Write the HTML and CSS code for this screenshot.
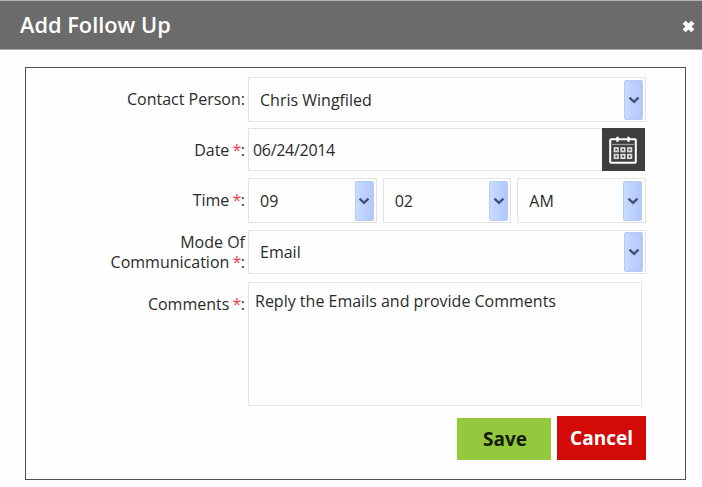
FILE: index.html
```html
<!DOCTYPE html>
<html lang="en">
<head>
<meta charset="utf-8">
<title>Add Follow Up</title>
<link rel="stylesheet" href="styles.css">
</head>
<body>
<svg width="0" height="0" class="defs">
  <symbol id="chevron" viewBox="0 0 12 8"><path d="M1.5 1.7 6 5.8 10.5 1.7" fill="none" stroke="#3f5478" stroke-width="2.5"/></symbol>
</svg>
<header class="titlebar">
  <h1><span>Add Follow Up</span></h1>
  <svg class="close" viewBox="0 0 12 12"><path d="M2 2 10 10M10 2 2 10" stroke="#fff" stroke-width="4"/></svg>
</header>
<main class="panel">
  <div class="row contact">
    <div class="label"><span>Contact Person:</span></div>
    <div class="select"><span>Chris Wingfiled</span><i class="arrow"><svg><use href="#chevron"/></svg></i></div>
  </div>
  <div class="row date">
    <div class="label"><span>Date <b>*</b>:</span></div>
    <div class="datebox"><span>06/24/2014</span>
      <i class="calendar"><svg width="28" height="28" viewBox="0 0 28 28" fill="none" stroke="#fff">
        <rect x="1.2" y="3.2" width="25.6" height="23.6" rx="1" stroke-width="2"/>
        <path d="M3 8.5h22" stroke="#999" stroke-width="1.3"/>
        <path d="M8.5 .7v5M19.5 .7v5" stroke-width="2.4"/>
        <g stroke="#ddd" stroke-width="1.7"><rect x="5.5" y="12" width="3.5" height="3.5"/><rect x="12.2" y="12" width="3.5" height="3.5"/><rect x="18.9" y="12" width="3.5" height="3.5"/><rect x="5.5" y="18.7" width="3.5" height="3.5"/><rect x="12.2" y="18.7" width="3.5" height="3.5"/><rect x="18.9" y="18.7" width="3.5" height="3.5"/></g>
      </svg></i>
    </div>
  </div>
  <div class="row time">
    <div class="label"><span>Time <b>*</b>:</span></div>
    <div class="times">
      <div class="select"><span>09</span><i class="arrow"><svg><use href="#chevron"/></svg></i></div>
      <div class="select"><span>02</span><i class="arrow"><svg><use href="#chevron"/></svg></i></div>
      <div class="select"><span>AM</span><i class="arrow"><svg><use href="#chevron"/></svg></i></div>
    </div>
  </div>
  <div class="row mode">
    <div class="label"><span>Mode Of<br>Communication <b>*</b>:</span></div>
    <div class="select"><span>Email</span><i class="arrow"><svg><use href="#chevron"/></svg></i></div>
  </div>
  <div class="row comments">
    <div class="label"><span>Comments <b>*</b>:</span></div>
    <div class="textarea"><span>Reply the Emails and provide Comments</span></div>
  </div>
  <div class="actions">
    <div class="button save"><span>Save</span></div>
    <div class="button cancel"><span>Cancel</span></div>
  </div>
</main>
</body>
</html>
```
FILE: styles.css
```css
* { box-sizing: border-box; }
body {
  margin: 0;
  height: 487px;
  overflow: hidden;
  background: #fefefe;
  color: #2b2b2b;
  font: 16px/20px "Open Sans", sans-serif;
}
.defs { position: absolute; }
.titlebar {
  height: 50px;
  padding: 0 7px 0 20px;
  display: flex;
  align-items: center;
  justify-content: space-between;
  background: #6b6b6b;
  border-top: 1px solid #b5b5b5;
  border-bottom: 1px solid #a5a5a5;
  color: #fff;
}
h1 { margin: 0; font-size: 21.8px; line-height: 30px; font-weight: 600; }
.close { width: 13px; height: 13px; margin-top: 2px; }
.panel {
  width: 661px;
  height: 413px;
  margin: 17px 0 0 25px;
  padding-top: 9px;
  border: 1px solid #505050;
}
.row {
  display: grid;
  grid-template-columns: 219px 398px;
  column-gap: 3px;
}
.label { text-align: right; white-space: nowrap; }
.label b { margin: 0 -.5px 0 -1px; color: #f23a50; font-weight: 400; }
.select, .datebox, .textarea { border: 1px solid #e3e3e3; background: #fefefe; }
.select {
  height: 45px;
  padding: 2px 2px 2px 11px;
  display: flex;
  align-items: center;
  justify-content: space-between;
}
.arrow {
  width: 19px;
  height: 40px;
  border-radius: 2px;
  border: 1px solid #b3cbf8;
  background: linear-gradient(90deg, #c9dbff, #b0c8fb);
  display: grid;
  place-items: center;
}
.arrow svg { width: 12px; height: 8px; }
.contact { height: 51px; }
.contact .label { padding-top: 12px; }
.date { height: 50px; }
.date .label { padding-top: 12px; }
.datebox {
  width: 397px;
  height: 43px;
  padding-left: 4px;
  display: flex;
  align-items: center;
  justify-content: space-between;
}
.datebox span { letter-spacing: -.3px; }
.calendar {
  width: 43px;
  height: 43px;
  margin-right: -1px;
  background: #3e3e3e;
  display: grid;
  place-items: center;
}
.calendar svg { margin-right: 1px; }
.time { height: 52px; }
.time .label { padding-top: 12px; }
.times { width: 398px; display: flex; gap: 6px; }
.times .select { width: 129px; }
.times .select:last-child { padding-right: 3px; }
.mode { height: 52px; }
.mode .label { padding-top: 2px; }
.mode .select { height: 44px; }
.comments { height: 134px; }
.comments .label { padding-top: 12px; }
.textarea { width: 394px; height: 124px; padding: 8px 6px; }
.actions {
  display: flex;
  justify-content: flex-end;
  align-items: flex-end;
  gap: 6px;
  margin-right: 39px;
}
.button {
  height: 44px;
  width: 89px;
  display: grid;
  place-items: center;
  font-size: 19px;
  font-weight: 700;
}
.save { width: 94px; height: 42px; background: #95c93d; color: #151c08; }
.save span { padding-left: 2px; }
.cancel { background: #d20a08; color: #fff; }
```
